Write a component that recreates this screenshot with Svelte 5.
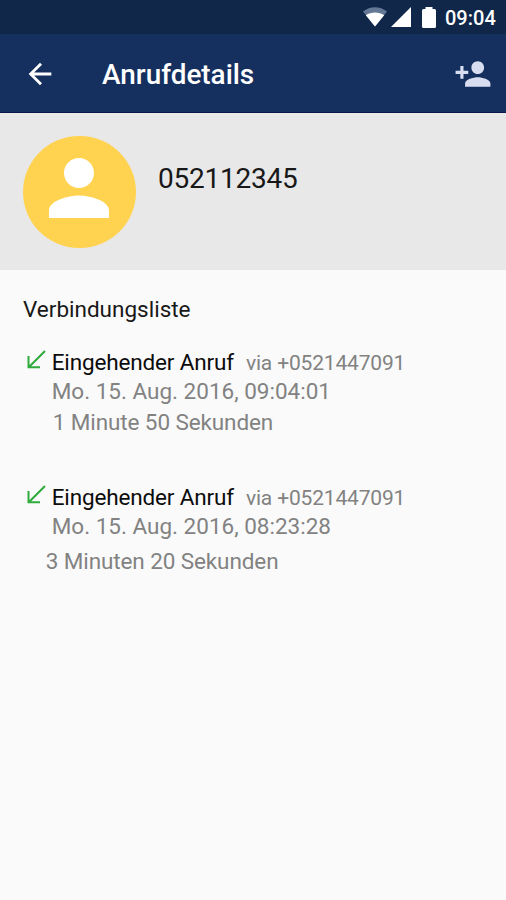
<script>
  const calls = [
    { via: '+0521447091', date: 'Mo. 15. Aug. 2016, 09:04:01', duration: '1 Minute 50 Sekunden' },
    { via: '+0521447091', date: 'Mo. 15. Aug. 2016, 08:23:28', duration: '3 Minuten 20 Sekunden' }
  ];
</script>

<div class="screen">
  <div class="status">
    <svg class="wifi" width="24" height="20" viewBox="0 0 24 20">
      <path d="M0 4.5C7 -1.2 17 -1.2 24 4.5L12 19.5Z" fill="#647795" />
      <path d="M2.8 8.2C8 4.6 16 4.6 21.2 8.2L12 19.5Z" fill="#fff" />
    </svg>
    <svg class="signal" width="20" height="20" viewBox="0 0 20 20"><path d="M20 0V20H0Z" fill="#fff" /></svg>
    <svg class="battery" width="14" height="21" viewBox="0 0 14 21">
      <path d="M3.5 0h7v2h2q1.5 0 1.5 1.5v16q0 1.5-1.5 1.5h-11q-1.5 0-1.5-1.5v-16q0-1.5 1.5-1.5h2z" fill="#fff" />
    </svg>
    <span class="clock">09:04</span>
  </div>

  <header class="bar">
    <svg class="back" width="34" height="34" viewBox="0 0 24 24">
      <path d="M20 11H7.83l5.59-5.59L12 4l-8 8 8 8 1.41-1.41L7.83 13H20v-2z" fill="#fff" />
    </svg>
    <h1>Anrufdetails</h1>
    <svg class="add" width="38" height="38" viewBox="0 0 24 24">
      <path d="M15 12c2.21 0 4-1.79 4-4s-1.79-4-4-4-4 1.79-4 4 1.79 4 4 4zm-9-2V7H4v3H1v2h3v3h2v-3h3v-2H6zm9 4c-2.67 0-8 1.34-8 4v2h16v-2c0-2.66-5.33-4-8-4z" fill="#d8def0" />
    </svg>
  </header>

  <section class="contact">
    <div class="avatar">
      <svg width="90" height="90" viewBox="0 0 24 24">
        <path d="M12 12c2.21 0 4-1.79 4-4s-1.79-4-4-4-4 1.79-4 4 1.79 4 4 4zm0 2c-2.67 0-8 1.34-8 4v2h16v-2c0-2.66-5.33-4-8-4z" fill="#fff" />
      </svg>
    </div>
    <div class="number">052112345</div>
  </section>

  <main>
    <h2>Verbindungsliste</h2>
    {#each calls as call, i}
      <article class:second={i === 1}>
        <svg class="incoming" width="19" height="19" viewBox="0 0 19 19">
          <path d="M18 1L2 17M1.5 6V17.3H13" fill="none" stroke="#2fab3c" stroke-width="2" />
        </svg>
        <div class="info">
          <div class="line"><span class="kind">Eingehender Anruf</span><span class="via">via {call.via}</span></div>
          <div class="date">{call.date}</div>
          <div class="duration">{call.duration}</div>
        </div>
      </article>
    {/each}
  </main>
</div>

<style>
  :global(body) { margin: 0; background: #fafafa; }
  .screen {
    width: 506px;
    height: 900px;
    overflow: hidden;
    background: #fafafa;
    font-family: Roboto, "Liberation Sans", sans-serif;
    color: #181818;
    white-space: nowrap;
  }
  svg { display: block; flex: none; }
  h1, h2 { margin: 0; }
  .status {
    height: 34px;
    display: flex;
    align-items: flex-start;
    background: #10274a;
    color: #fff;
  }
  .wifi { margin: 7px 0 0 363px; }
  .signal { margin: 7px 0 0 4px; }
  .battery { margin: 7px 0 0 11px; }
  .clock { margin: 6px 0 0 9px; font-size: 20px; line-height: 24px; font-weight: 500; }
  .bar {
    box-sizing: border-box;
    height: 79px;
    display: flex;
    background: #15305f;
    border-bottom: 1px solid #0b1748;
    color: #fff;
  }
  .back { margin: 22.5px 0 0 23px; }
  h1 { width: 351px; margin: 24px 0 0 45px; font-size: 27.9px; line-height: 34px; font-weight: 500; }
  .add { margin: 21px 0 0 1px; }
  .contact {
    box-sizing: border-box;
    height: 157px;
    padding: 22.5px 0 0 23px;
    display: flex;
    background: #e8e8e8;
  }
  .avatar {
    box-sizing: border-box;
    width: 112.5px;
    height: 112.5px;
    padding: 0 0.5px 8px 0;
    display: flex;
    align-items: center;
    justify-content: center;
    border-radius: 50%;
    background: #ffd350;
  }
  .number { margin: 26.5px 0 0 22.5px; font-size: 28px; line-height: 34px; letter-spacing: -0.24px; }
  main { padding: 24px 0 0 23px; }
  h2 { font-size: 22.5px; line-height: 30px; font-weight: 400; }
  article { display: flex; margin-top: 23px; height: 112px; }
  .incoming { margin: 3px 0 0 4px; }
  .info { padding-left: 5.7px; font-size: 22.5px; line-height: 30px; color: #828282; }
  .line { display: flex; align-items: baseline; height: 29px; }
  .kind { color: #0c0c0c; letter-spacing: -0.15px; }
  .via { margin-left: 12px; font-size: 21px; letter-spacing: -0.17px; }
  .duration { margin: 1px 0 0 1px; letter-spacing: -0.1px; }
  .second .duration { margin: 5px 0 0 -6px; }
</style>
